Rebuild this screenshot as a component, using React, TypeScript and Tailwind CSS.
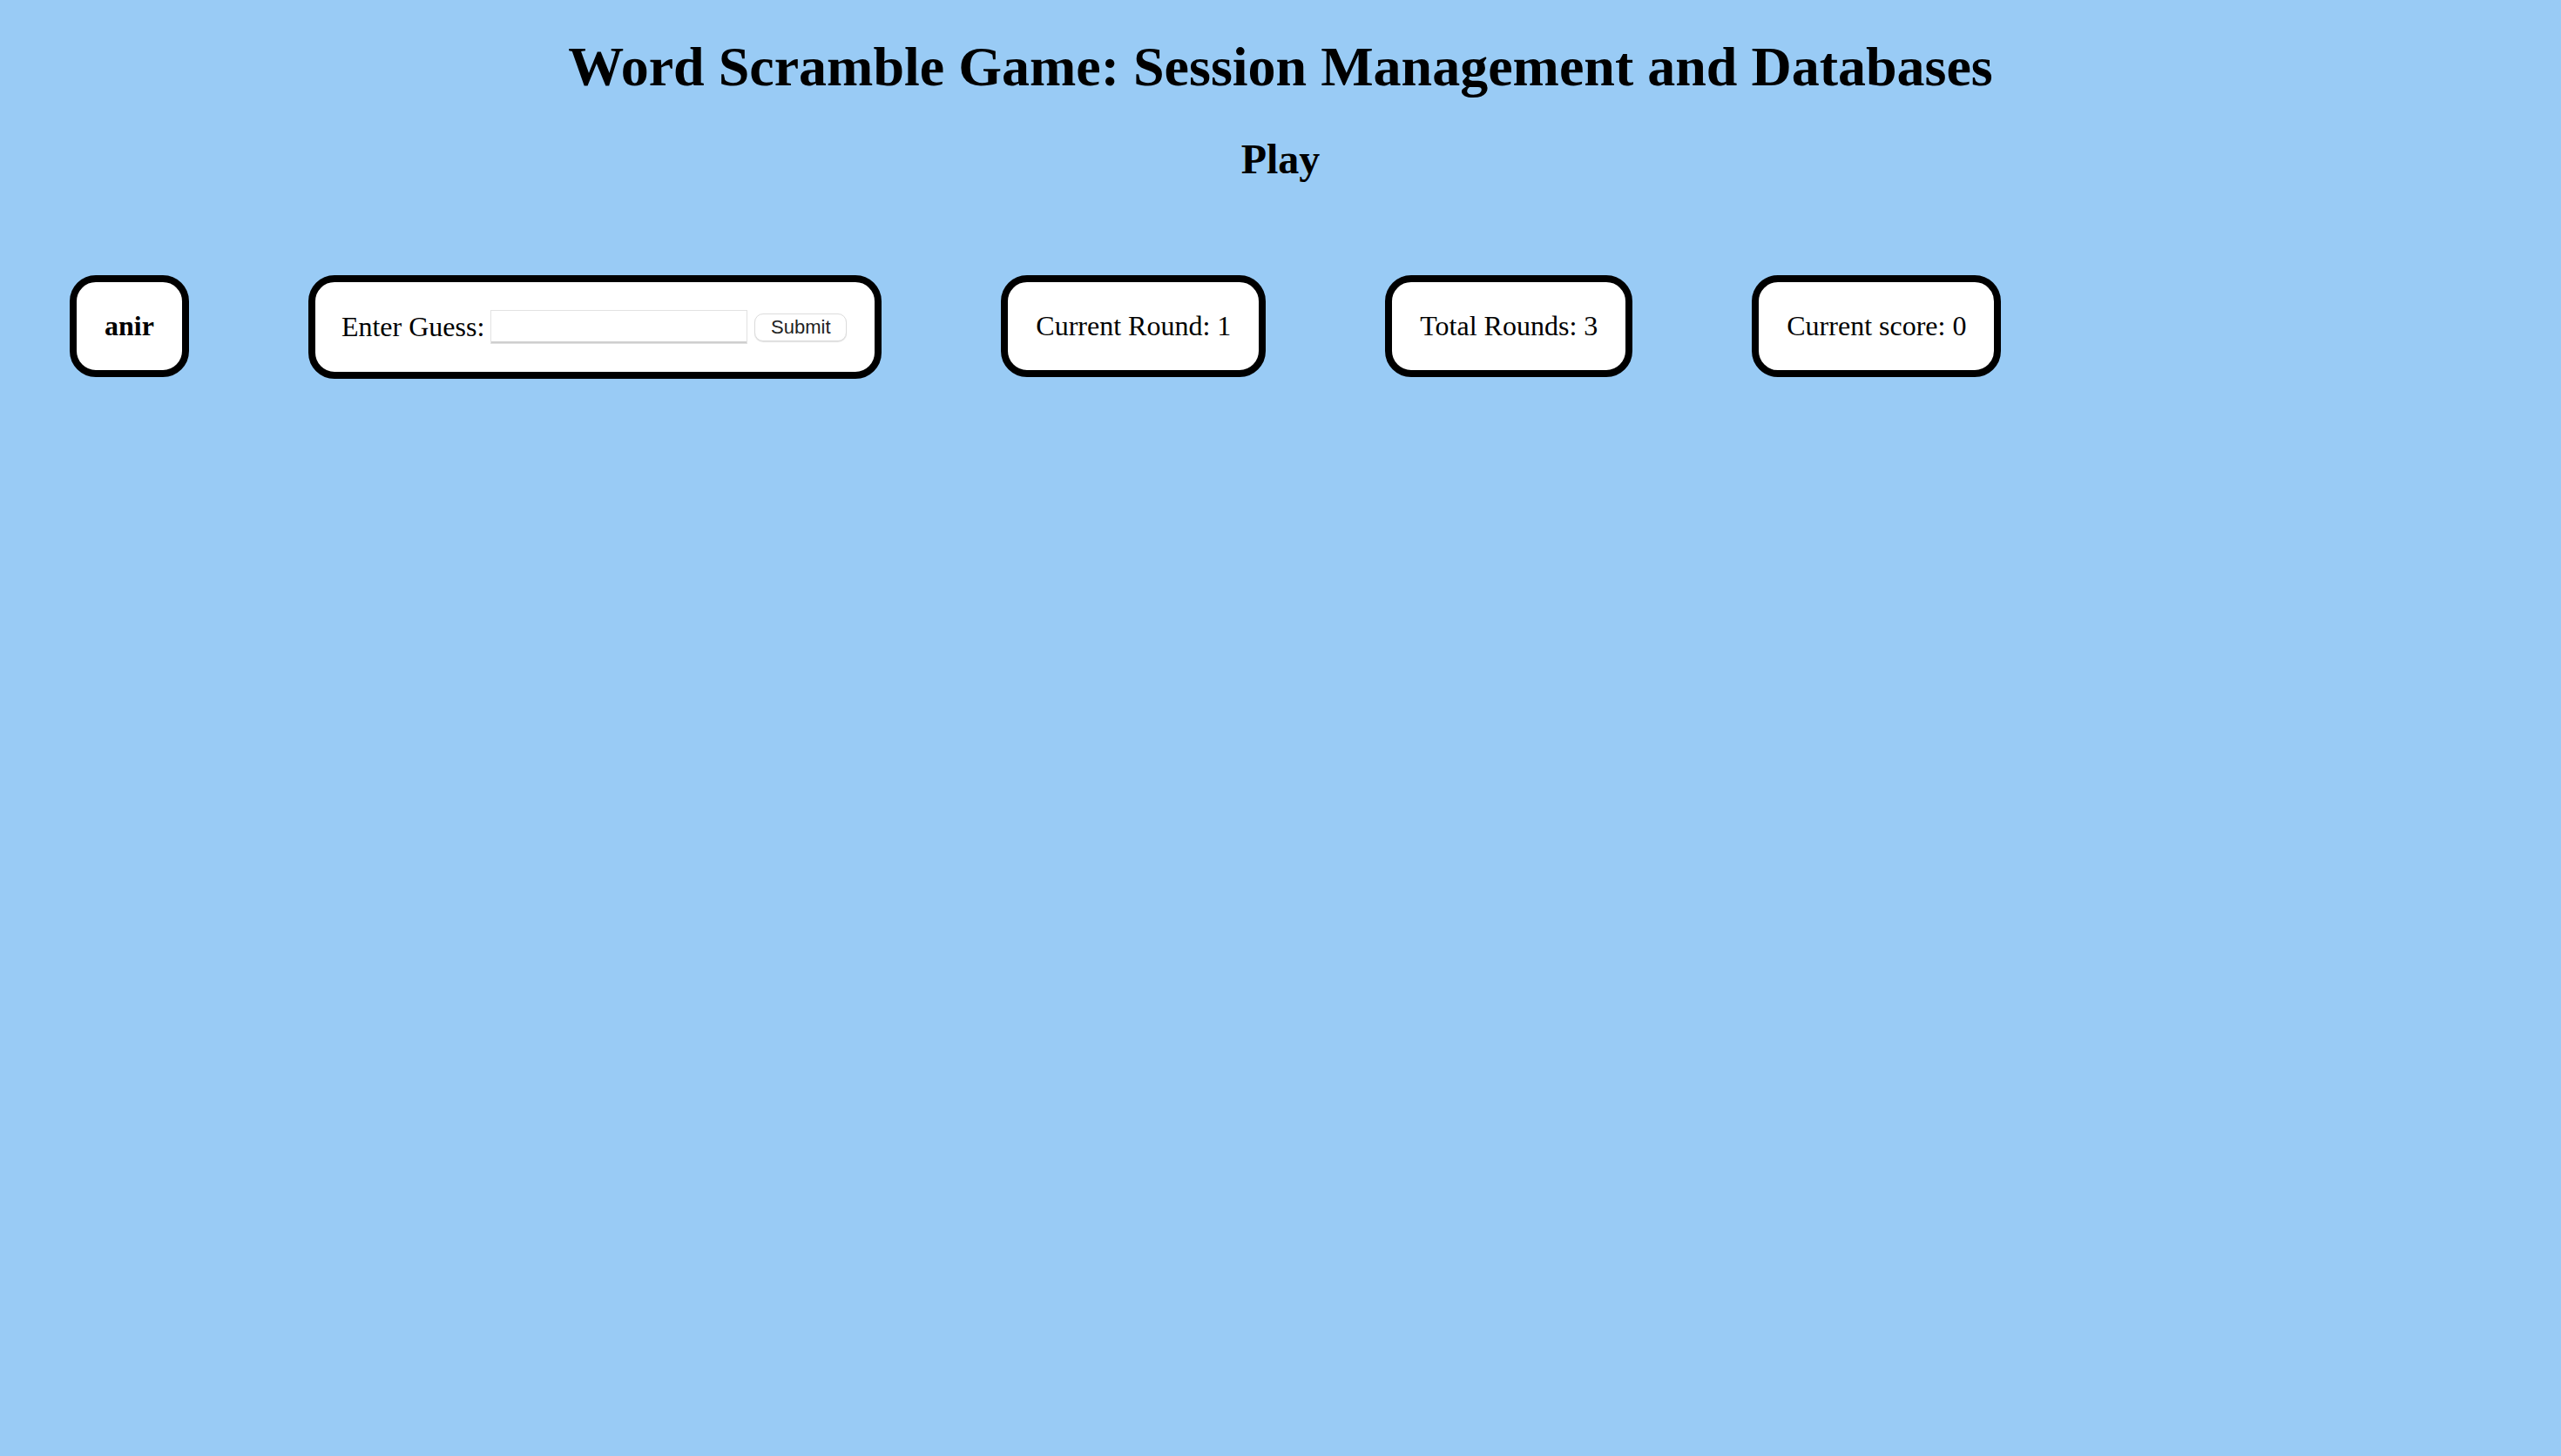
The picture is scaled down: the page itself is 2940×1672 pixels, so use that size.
import { useState } from 'react';

const serif = 'font-["Liberation_Serif","Times_New_Roman",serif]';

const StatBox = ({ children, bold = false }: { children: React.ReactNode; bold?: boolean }) => (
  <div
    className={`bg-white border-[8px] border-black rounded-[30px] px-[32px] py-[32px] text-[32px] leading-[37px] whitespace-nowrap ${
      bold ? 'font-bold' : ''
    }`}
  >
    {children}
  </div>
);

const App = () => {
  const [guess, setGuess] = useState('');

  return (
    <div className={`min-h-screen bg-[#99cbf5] text-black ${serif}`}>
      {/* Titles */}
      <div className="pt-[41px] text-center">
        <h1 className="text-[64px] font-bold leading-[71px]">
          Word Scramble Game: Session Management and Databases
        </h1>
        <h2 className="mt-[44px] text-[48px] font-bold leading-[53px]">Play</h2>
      </div>

      {/* Game row */}
      <div className="flex items-start gap-[137px] pl-[80px] pt-[107px]">
        <StatBox bold>anir</StatBox>

        <div className="bg-white border-[8px] border-black rounded-[30px] pl-[30px] pr-[32px] py-[32px] text-[32px] leading-[37px] whitespace-nowrap">
          <form
            className="flex items-center"
            onSubmit={(e) => {
              e.preventDefault();
              setGuess('');
            }}
          >
            <label htmlFor="guess">Enter Guess:</label>
            <input
              id="guess"
              value={guess}
              onChange={(e) => setGuess(e.target.value)}
              className="ml-[7px] w-[295px] h-[39px] bg-white border border-[#e2e2e2] shadow-[inset_0_-2px_0_#cfcfcf] outline-none px-2 text-[24px]"
            />
            <button
              type="submit"
              className='ml-[8px] w-[106px] h-[32px] bg-white border border-[#dcdcdc] rounded-[10px] shadow-[0_1px_1px_rgba(0,0,0,0.12)] font-["Liberation_Sans",Arial,sans-serif] text-[22px] leading-none text-[#222]'
            >
              Submit
            </button>
          </form>
        </div>

        <StatBox>Current Round: 1</StatBox>
        <StatBox>Total Rounds: 3</StatBox>
        <StatBox>Current score: 0</StatBox>
      </div>
    </div>
  );
};

export default App;
